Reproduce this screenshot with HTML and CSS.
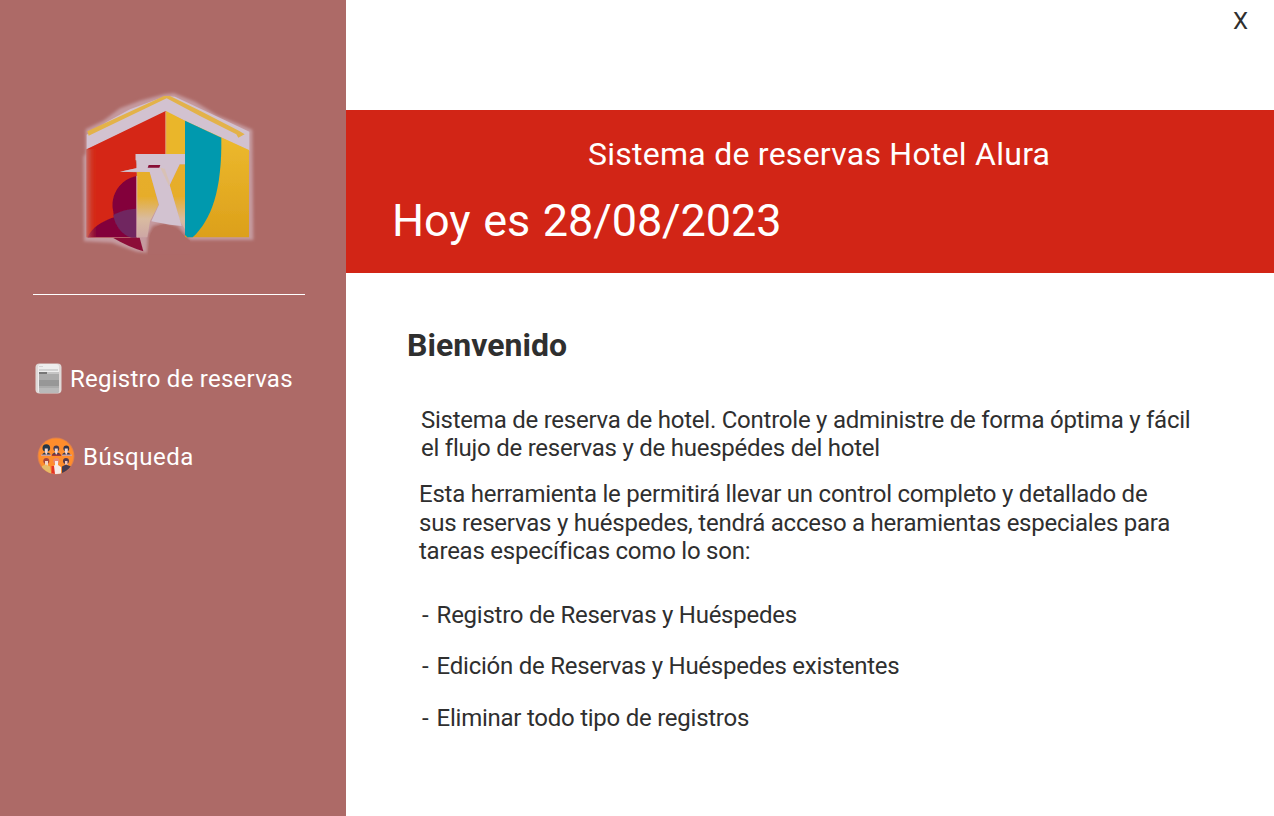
FILE: index.html
```html
<!DOCTYPE html>
<html lang="es">
<head>
<meta charset="utf-8">
<title>Hotel Alura</title>
<link rel="stylesheet" href="styles.css">
</head>
<body>
<div class="app">
  <aside class="sidebar">
    <svg class="logo" viewBox="0 0 600 570" aria-label="Hotel Alura">
      <defs>
        <linearGradient id="gold" x1="0" y1="0" x2="0" y2="1"><stop offset="0" stop-color="#efbd30"/><stop offset="1" stop-color="#dca01b"/></linearGradient>
        <linearGradient id="fade" gradientUnits="userSpaceOnUse" x1="0" y1="250" x2="0" y2="472"><stop offset="0" stop-color="#e7ae2b"/><stop offset=".45" stop-color="#e6ad2c"/><stop offset=".75" stop-color="#d9bba0"/><stop offset="1" stop-color="#cda7a5"/></linearGradient>
        <linearGradient id="edge"><stop offset="0" stop-color="#c07570" stop-opacity=".8"/><stop offset="1" stop-color="#d52814" stop-opacity="0"/></linearGradient>
        <filter id="soft" x="-5%" y="-5%" width="110%" height="110%"><feGaussianBlur stdDeviation="4"/></filter>
        <filter id="fine" x="-5%" y="-5%" width="110%" height="110%"><feGaussianBlur stdDeviation="1.3"/></filter>
      </defs>
      <path filter="url(#soft)" fill="#c59a9f" d="M47 148L100 122L150 85L210 62L285 42L312 40L375 65L440 105L547 149L550 480L360 480L322 438L285 428L248 438L234 466L231 518L200 515L126 488L42 484L40 230L47 220Z"/>
      <g filter="url(#fine)">
        <path fill="#d2c2d0" d="M50 164L110 126L180 88L288 48L315 50L538 155V212L288 96L50 208Z"/>
        <path fill="#e3b249" d="M52 154L282 48L300 48L390 92L508 153L524 163L505 173L499 163L390 108L290 55L56 167Z"/>
        <path fill="#d52814" d="M50 208L287 93V222H197V240L201 264L150 275L200 277V472H50Z"/>
        <path fill="#eab62c" d="M288 93L345 122V222H288Z"/>
        <path fill="url(#gold)" d="M345 122L537 210V472H345Z"/>
        <path fill="#0099ae" d="M345 122L454 173C456 330 425 418 368 472H352L345 465Z"/>
        <path fill="url(#fade)" d="M201 276H240L266 374L240 424L232 472H201Z"/>
        <path fill="url(#fade)" d="M345 253H329L299 315L330 425L345 448Z"/>
        <path fill="#d2c2d0" d="M197 222H345V253H329L299 315L335 438L300 434L244 424L267 374L239 276L150 275L199 265L201 242L197 240Z"/>
        <path fill="#e5bf83" d="M271 263L284 266L300 310L296 316Z" opacity=".35"/>
        <path fill="#870a36" d="M236 255H271L268 263H233Z"/>
        <path fill="#83033b" d="M200 288C150 298 121 344 129 390L132 412C96 424 66 442 53 472H200Z"/>
        <path fill="#702561" d="M200 386C170 387 148 395 130 405C134 436 156 466 185 473H200Z"/>
        <path fill="url(#edge)" d="M50 208H80V472H50Z"/>
        <path fill="#8c1138" d="M130 474L209 473L220 514Q174 500 130 474Z"/>
        <path fill="#d9b3b1" d="M199 288H202V472H199Z"/>
        <path fill="#e5a36c" d="M286 96H289V222H286Z"/>
        <path fill="#ad6a67" d="M234 524L239 474Q246 437 280 434Q321 437 346 472L360 482V524Z"/>
      </g>
    </svg>
    <div class="divider"></div>
    <nav class="menu">
      <a class="item">
        <svg class="icon-doc" viewBox="0 0 28 32">
          <rect x=".5" y=".5" width="26" height="30" rx="4" fill="#dfd9d8"/>
          <rect x="3" y="1" width="21" height="29" rx="3" fill="#eee"/>
          <path fill="#c7c7c7" d="M4 3h4v1H4zM4 6h19v2H4z" opacity=".7"/>
          <path fill="#ababab" d="M4 10h20v18q0 2-2 2H6q-2 0-2-2z"/>
          <path fill="#c5c5c5" d="M12 9h12v2H12z"/>
          <path fill="#777" d="M4 9h8v2H4z"/>
          <path fill="#979797" d="M4 17h20v6H4z"/>
          <path fill="#b9b9b9" d="M4 25h20v3q0 2-2 2H6q-2 0-2-2z"/>
        </svg>
        <span>Registro de reservas</span>
      </a>
      <a class="item item-search">
        <svg class="icon-people" viewBox="0 0 38 38">
          <defs>
            <clipPath id="disc"><circle cx="19" cy="19" r="18"/></clipPath>
            <g id="bust"><path d="M-4.500 10Q-4.500 7 0 6Q4.500 7 4.500 10Z"/><circle cy="2.500" r="2.900"/><path fill="#efd5d2" d="M-1.500 2.500H1.500V6L0 9.500L-1.500 6Z"/></g>
          </defs>
          <circle cx="19" cy="19" r="18.500" fill="#d97e50"/>
          <circle cx="19" cy="19" r="17.500" fill="#ff8d2c"/>
          <g clip-path="url(#disc)">
            <circle cx="9.300" cy="11" r="3.800" fill="#253949"/>
            <use href="#bust" x="9.300" y="9" fill="#253949"/><use href="#bust" x="19.300" y="9" fill="#493d4d"/><use href="#bust" x="29.300" y="9" fill="#34354a"/>
            <path fill="#cfa09a" d="M4 17.500h10v1.500H4zM25 17.500h10v1.500H25z"/><path fill="#a63a35" d="M15 17.500h9v1.500h-9z"/>
            <circle cx="9.300" cy="24" r="3" fill="#a5463c"/><path fill="#f1d6c7" d="M8 24h3v5H8z"/>
            <path fill="#e7bc68" d="M5 29l4-1.500 4 2 1.500 8H4z"/>
            <circle cx="19.300" cy="24" r="3" fill="#e98872"/><path fill="#f6ebe7" d="M18 24h3v4l3 2v7h-9v-7l3-2z"/><path fill="#e33526" d="M14.500 29l2.500 0 1 8h-3.500z"/>
            <circle cx="29" cy="24" r="3" fill="#563949"/><path fill="#f1c5b9" d="M28 24h2.500v5H28z"/><path fill="#453b50" d="M25 29.500l4-2 5 2v8h-9z"/>
          </g>
        </svg>
        <span>Búsqueda</span>
      </a>
    </nav>
  </aside>
  <main class="main">
    <header class="topbar"><button class="close">X</button></header>
    <section class="banner">
      <h1 class="title">Sistema de reservas Hotel Alura</h1>
      <p class="date">Hoy es 28/08/2023</p>
    </section>
    <section class="content">
      <h2 class="welcome">Bienvenido</h2>
      <p class="intro">Sistema de reserva de hotel. Controle y administre de forma óptima y fácil<br>el flujo de reservas y de huespédes del hotel</p>
      <p class="detail">Esta herramienta le permitirá llevar un control completo y detallado de<br>sus reservas y huéspedes, tendrá acceso a heramientas especiales para<br>tareas específicas como lo son:</p>
      <ul class="features">
        <li>Registro de Reservas y Huéspedes</li>
        <li>Edición de Reservas y Huéspedes existentes</li>
        <li>Eliminar todo tipo de registros</li>
      </ul>
    </section>
  </main>
</div>
</body>
</html>
```
FILE: styles.css
```css
* { box-sizing: border-box; margin: 0; padding: 0; }
body { font-family: Roboto, sans-serif; font-size: 24px; color: #2f2f2f; background: #fff; overflow: hidden; white-space: nowrap; }
.app { display: flex; width: 1274px; height: 816px; }
.sidebar { flex: 0 0 346px; background: #ad6a67; color: #fff; }
.logo { display: block; width: 200px; height: 190px; margin: 80px 0 0 70px; }
.divider { width: 272px; height: 1px; margin: 24px 0 0 33px; background: #fff; }
.menu { display: flex; flex-direction: column; gap: 38px; padding: 64px 0 0 35px; letter-spacing: .25px; }
.item { display: flex; align-items: center; height: 40px; gap: 7px; }
.item-search { padding-left: 2px; gap: 8px; letter-spacing: .5px; }
.icon-doc { width: 28px; height: 32px; }
.icon-people { width: 38px; height: 38px; margin-bottom: 2px; }
.main { flex: 1; }
.topbar { display: flex; justify-content: flex-end; height: 110px; padding: 7px 26px 0 0; }
.close { height: 28px; border: 0; background: none; font: 24px/28px Roboto, sans-serif; color: #2f2f2f; }
.banner { height: 163px; padding: 24px 0 0 46px; background: #d22516; color: #fff; }
.title { margin-left: 196px; font-size: 32px; font-weight: 400; line-height: 40px; letter-spacing: .25px; }
.date { margin-top: 20px; font-size: 45px; line-height: 54px; letter-spacing: -.08px; word-spacing: 1.6px; }
.content { padding: 52px 0 0 61px; }
.welcome { font-size: 32px; font-weight: 700; line-height: 40px; letter-spacing: .03px; }
.intro { margin: 41px 0 0 14px; line-height: 28px; letter-spacing: -.24px; }
.detail { margin: 18px 0 0 12px; line-height: 28.5px; letter-spacing: -.23px; }
.features { display: flex; flex-direction: column; gap: 23.5px; margin: 35px 0 0 15px; line-height: 28px; letter-spacing: -.25px; list-style: none; }
.features li { display: flex; }
.features li::before { content: "-"; width: 14.6px; }
```
